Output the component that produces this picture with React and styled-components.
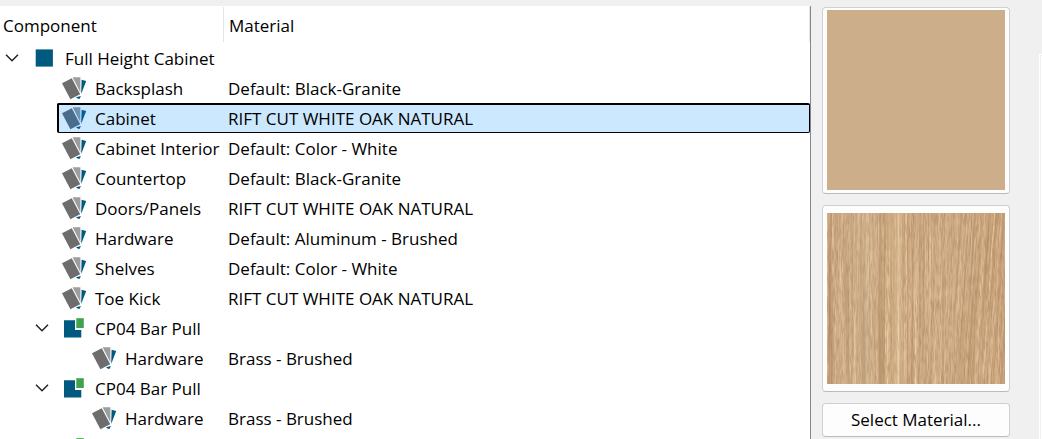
import React from 'react';
import styled, { createGlobalStyle } from 'styled-components';

const Global = createGlobalStyle`
  * { box-sizing: border-box; }
  body {
    margin: 0;
    background: #f0f0f0;
    color: #000;
    font-family: "Open Sans", "Noto Sans", sans-serif;
    font-size: 17px;
    line-height: 24px;
  }
`;

const Page = styled.main`
  display: flex;
  height: 100vh;
  overflow: hidden;
  padding-top: 6px;
`;

const TreePane = styled.section`
  flex: 1;
  min-width: 0;
  overflow: hidden;
  background: #fff;
  border-right: 1px solid #828790;
`;

const Tree = styled.table`
  width: 100%;
  table-layout: fixed;
  border-collapse: collapse;
  white-space: nowrap;
`;

const NameCol = styled.col`
  width: 224px;
`;

const HeadCell = styled.th`
  height: 37px;
  padding: 1px 0 1px;
  font-weight: 400;
  text-align: left;
`;

const HeadLabel = styled.div`
  display: flex;
  align-items: center;
  height: 35px;
  padding: 3px 0 0 ${(p) => (p.$first ? 3 : 5)}px;
  border-right: 1px solid #e5e5e5;
`;

const Cell = styled.td`
  height: 30px;
  padding: 0;
`;

const NameLine = styled.div`
  display: flex;
  height: 30px;
  padding-left: ${(p) => p.$level * 30}px;
`;

const Toggle = styled.button`
  display: flex;
  flex: none;
  align-items: center;
  justify-content: center;
  width: 27px;
  height: 30px;
  padding: 0 3px 0 0;
  border: 0;
  background: none;
`;

const Spacer = styled.span`
  flex: none;
  width: 27px;
`;

const Name = styled.div`
  display: flex;
  flex: 1;
  align-items: center;
  height: 30px;
  padding-top: 1px;
  border: solid ${(p) => (p.$selected ? '#000' : 'transparent')};
  border-width: 2px 0 1px 2px;
  border-radius: 2px 0 0 2px;
  background: ${(p) => (p.$selected ? '#cce8ff' : 'transparent')};
`;

const IconSlot = styled.span`
  display: flex;
  flex: none;
  align-items: flex-start;
  width: 36px;
  height: 26px;
  padding-left: 2px;
`;

const Material = styled.div`
  display: flex;
  align-items: center;
  height: 30px;
  padding: 1px 0 0 4px;
  border: solid ${(p) => (p.$selected ? '#000' : 'transparent')};
  border-width: 2px 1px 1px 0;
  border-radius: 0 2px 2px 0;
  background: ${(p) => (p.$selected ? '#cce8ff' : 'transparent')};
`;

const Side = styled.aside`
  display: flex;
  flex: none;
  width: 231px;
`;

const Previews = styled.div`
  display: flex;
  flex: 1;
  flex-direction: column;
  gap: 11px;
  padding: 1px 29px 0 11px;
`;

const Preview = styled.button`
  display: flex;
  align-items: flex-start;
  height: 187px;
  padding: ${(p) => p.$inset}px 4px 0;
  border: 1px solid #d0d0d0;
  border-bottom-color: #bbb;
  border-radius: 4px;
  background: #fdfdfd;
`;

const ColorSwatch = styled.span`
  display: block;
  width: 100%;
  height: 180px;
  background: #ccae8a;
`;

const Wood = styled.svg`
  display: block;
  width: 100%;
  height: 171px;
`;

const SelectButton = styled.button`
  height: 34px;
  padding: 0;
  border: 1px solid #d0d0d0;
  border-bottom-color: #bbb;
  border-radius: 4px;
  background: #fdfdfd;
  color: #000;
  font: inherit;
`;

const Edge = styled.div`
  width: 3px;
  margin-top: 48px;
  border: solid #fff;
  border-width: 1px 0 0 1px;
  background: #fff;
  box-shadow: inset 1px 1px #f0f0f0;
`;

function Chevron() {
  return (
    <svg width="14" height="10" viewBox="0 0 14 10" aria-hidden="true">
      <path d="M1 1.8 L7 7.8 L13 1.8" fill="none" stroke="#222" strokeWidth="1.5" />
    </svg>
  );
}

function SwatchIcon({ selected }) {
  const [front, middle, back] = selected
    ? ['#4b6d8d', '#7092b0', '#005f96']
    : ['#6d6d6d', '#9d9d9d', '#005a80'];
  return (
    <svg width="26" height="24" viewBox="0 0 26 24" aria-hidden="true">
      <path d="M20.6 3.8 L25.2 5 L20.2 18 Z" fill={back} />
      <path d="M15 21.2 L20 20 L18.4 23 L16.6 22.6 Z" fill={back} />
      <path d="M11.6 1.2 H19.4 V16.6 Z" fill={middle} />
      <path d="M1 7.2 L10.8 2.2 L19.2 18.3 L9.4 23.2 Z" fill={front} />
    </svg>
  );
}

function RootIcon() {
  return (
    <svg width="26" height="24" viewBox="0 0 26 24" aria-hidden="true">
      <rect x="4.7" y="3.4" width="17.2" height="17.2" fill="#005a80" />
    </svg>
  );
}

function PartIcon() {
  return (
    <svg width="26" height="24" viewBox="0 0 26 24" aria-hidden="true">
      <path d="M3 4.2 H14 V14 H20.3 V21.6 H3 Z" fill="#005a80" />
      <rect x="15.3" y="2.2" width="7.5" height="9.8" fill="#3fa34d" />
    </svg>
  );
}

const icons = { root: RootIcon, part: PartIcon, swatch: SwatchIcon };

const rows = [
  { level: 0, icon: 'root', name: 'Full Height Cabinet' },
  { level: 1, icon: 'swatch', name: 'Backsplash', material: 'Default: Black-Granite' },
  { level: 1, icon: 'swatch', name: 'Cabinet', material: 'RIFT CUT WHITE OAK NATURAL', selected: true },
  { level: 1, icon: 'swatch', name: 'Cabinet Interior', material: 'Default: Color - White' },
  { level: 1, icon: 'swatch', name: 'Countertop', material: 'Default: Black-Granite' },
  { level: 1, icon: 'swatch', name: 'Doors/Panels', material: 'RIFT CUT WHITE OAK NATURAL' },
  { level: 1, icon: 'swatch', name: 'Hardware', material: 'Default: Aluminum - Brushed' },
  { level: 1, icon: 'swatch', name: 'Shelves', material: 'Default: Color - White' },
  { level: 1, icon: 'swatch', name: 'Toe Kick', material: 'RIFT CUT WHITE OAK NATURAL' },
  { level: 1, icon: 'part', name: 'CP04 Bar Pull' },
  { level: 2, icon: 'swatch', name: 'Hardware', material: 'Brass - Brushed' },
  { level: 1, icon: 'part', name: 'CP04 Bar Pull' },
  { level: 2, icon: 'swatch', name: 'Hardware', material: 'Brass - Brushed' },
  { level: 1, icon: 'part' },
];

function TreeRow({ level, icon, name, material, selected }) {
  const Icon = icons[icon];
  return (
    <tr aria-selected={selected}>
      <Cell>
        <NameLine $level={level}>
          {icon === 'swatch' ? (
            <Spacer />
          ) : (
            <Toggle type="button" aria-label="Collapse">
              <Chevron />
            </Toggle>
          )}
          <Name $selected={selected}>
            <IconSlot>
              <Icon selected={selected} />
            </IconSlot>
            {name}
          </Name>
        </NameLine>
      </Cell>
      <Cell>
        <Material $selected={selected}>{material}</Material>
      </Cell>
    </tr>
  );
}

function WoodGrain() {
  return (
    <Wood viewBox="0 0 178 171" preserveAspectRatio="none" aria-hidden="true">
      <defs>
        <filter id="grain" x="0" y="0" width="100%" height="100%" colorInterpolationFilters="sRGB">
          <feTurbulence type="fractalNoise" baseFrequency="0.42 0.004" numOctaves="3" seed="11" />
          <feColorMatrix
            values="0.36 0 0 0 0.64
                    0.42 0 0 0 0.48
                    0.46 0 0 0 0.31
                    0 0 0 0 1"
          />
        </filter>
        <filter id="pores" x="0" y="0" width="100%" height="100%" colorInterpolationFilters="sRGB">
          <feTurbulence type="fractalNoise" baseFrequency="0.7 0.08" numOctaves="2" seed="4" />
          <feColorMatrix
            values="0 0 0 0 0.66
                    0 0 0 0 0.52
                    0 0 0 0 0.38
                    1.6 0 0 0 -0.6"
          />
        </filter>
        <linearGradient id="bands">
          <stop offset="0" stopColor="#b98f68" stopOpacity="0.15" />
          <stop offset="0.22" stopColor="#dcc5a4" stopOpacity="0.3" />
          <stop offset="0.34" stopColor="#c39a6c" stopOpacity="0.2" />
          <stop offset="0.4" stopColor="#ecd2a6" stopOpacity="0.5" />
          <stop offset="0.45" stopColor="#c39a6c" stopOpacity="0.15" />
          <stop offset="0.7" stopColor="#d9b98c" stopOpacity="0.15" />
          <stop offset="1" stopColor="#b98455" stopOpacity="0.2" />
        </linearGradient>
        <linearGradient id="fade">
          <stop offset="0.6" stopColor="#000" />
          <stop offset="0.75" stopColor="#fff" />
        </linearGradient>
        <mask id="rightSide">
          <rect width="178" height="171" fill="url(#fade)" />
        </mask>
      </defs>
      <rect width="178" height="171" filter="url(#grain)" />
      <g mask="url(#rightSide)">
        <g transform="skewX(-4)">
          <rect width="210" height="171" filter="url(#grain)" />
        </g>
      </g>
      <rect width="178" height="171" filter="url(#pores)" />
      <rect width="178" height="171" fill="url(#bands)" />
    </Wood>
  );
}

export default function App() {
  return (
    <>
      <Global />
      <Page>
        <TreePane>
          <Tree>
            <colgroup>
              <NameCol />
              <col />
            </colgroup>
            <thead>
              <tr>
                <HeadCell scope="col"><HeadLabel $first>Component</HeadLabel></HeadCell>
                <HeadCell scope="col"><HeadLabel>Material</HeadLabel></HeadCell>
              </tr>
            </thead>
            <tbody>
              {rows.map((row, i) => (
                <TreeRow key={i} {...row} />
              ))}
            </tbody>
          </Tree>
        </TreePane>
        <Side>
          <Previews>
            <Preview type="button" aria-label="Color preview" $inset={2}><ColorSwatch /></Preview>
            <Preview type="button" aria-label="Texture preview" $inset={7}><WoodGrain /></Preview>
            <SelectButton type="button">Select Material...</SelectButton>
          </Previews>
          <Edge />
        </Side>
      </Page>
    </>
  );
}
